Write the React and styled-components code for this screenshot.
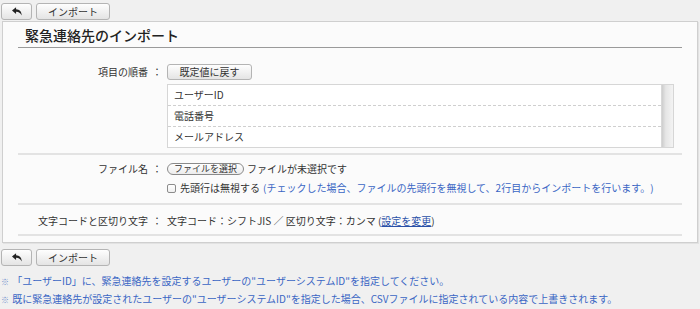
import React from "react";
import styled, { createGlobalStyle } from "styled-components";

const GlobalStyle = createGlobalStyle`
    html, body {
        margin: 0;
        padding: 0;
        background: #f0f0f0;
    }
    body {
        font-family: "Noto Sans CJK JP", "Noto Sans", sans-serif;
        font-size: 10px;
        color: #333;
        text-spacing-trim: space-all;
    }
`;

const Page = styled.div`
    width: 700px;
`;

const Toolbar = styled.div`
    display: flex;
    gap: 4px;
    padding: ${(p) => p.$pad || "3px 0 0 1px"};
`;

const Button = styled.button`
    display: inline-flex;
    align-items: center;
    justify-content: center;
    box-sizing: border-box;
    width: ${(p) => p.$w}px;
    height: ${(p) => p.$h || 17}px;
    padding: 0;
    border: 1px solid #b4b4b4;
    border-radius: 3px;
    background: linear-gradient(#fefefe, #e4e4e4);
    font-family: inherit;
    font-size: 10px;
    line-height: 1;
    color: #333;
`;

const Panel = styled.div`
    box-sizing: border-box;
    width: 696px;
    margin: 1px 0 0 2px;
    padding: 0 15px 6px 15px;
    background: #fbfbfb;
    border: 1px solid #cfcfcf;
    box-shadow: 1px 1px 0 #e2e2e2;
`;

const Title = styled.h1`
    margin: 0;
    padding: 3px 7px 2px;
    font-size: 14px;
    line-height: 20px;
    font-weight: 500;
    color: #222;
    border-bottom: 1px solid #9a9a9a;
`;

const Row = styled.div`
    display: grid;
    grid-template-columns: 144px 1fr;
    column-gap: 5px;
    align-items: start;
    padding: ${(p) => p.$pad};
    border-bottom: 2px solid #e3e3e3;
`;

const Label = styled.div`
    text-align: right;
    line-height: ${(p) => p.$lh || 15}px;
    white-space: nowrap;
`;

const Colon = styled.span`
    display: inline-block;
    width: 10px;
    margin-left: 4px;
    text-align: center;
`;

const Value = styled.div`
    display: flex;
    flex-direction: column;
    align-items: flex-start;
    gap: ${(p) => p.$gap || 0}px;
    min-width: 0;
`;

const Line = styled.div`
    display: flex;
    align-items: center;
    height: 15px;
    white-space: pre;
`;

const ListBox = styled.div`
    display: flex;
    align-self: stretch;
    margin: 4px 8px 0 0;
    background: #fff;
    border: 1px solid #d6d6d6;
`;

const Items = styled.div`
    flex: 1;
`;

const Item = styled.div`
    height: 20px;
    line-height: 20px;
    padding-left: 6px;
    border-bottom: 1px dashed #cfcfcf;

    &:last-child {
        border-bottom: none;
    }
`;

const Track = styled.div`
    width: 11px;
    background: linear-gradient(to right, #cdcdcd, #e6e6e6 35%, #f3f3f3);
    border-left: 1px solid #d8d8d8;
`;

const FileButton = styled.button`
    box-sizing: border-box;
    height: 12px;
    padding: 0 6px;
    margin-right: 3px;
    border: 1px solid #8a8a8a;
    border-radius: 6px;
    background: linear-gradient(#ffffff, #ececec);
    font-family: inherit;
    font-size: 9px;
    line-height: 1;
    color: #333;
`;

const Check = styled.input.attrs({ type: "checkbox" })`
    appearance: none;
    box-sizing: border-box;
    width: 9px;
    height: 9px;
    margin: 2px 4px 0 0;
    border: 1px solid #8c8c8c;
    border-radius: 2px;
    background: linear-gradient(#fff, #f0f0f0);
`;

const Hint = styled.span`
    color: #3a66c4;
    margin-left: 3px;
`;

const Link = styled.a`
    color: #2950a8;
    text-decoration: underline;
`;

const Notes = styled.div`
    padding: 6px 0 0 1px;
    color: #3a66c4;
    line-height: 17px;
`;

const Mark = styled.span`
    display: inline-block;
    width: 9px;
    font-size: 8px;
    color: #6f8fcc;
`;

const BackIcon = () => (
    <svg width="10" height="9" viewBox="0 0 16 14" aria-hidden="true">
        <path
            d="M6.5 0 L0 5.5 L6.5 11 V7.6 C10.5 7.4 13.2 9.2 15.5 13.5 C15.6 7.4 12 3.6 6.5 3.5 Z"
            fill="#222"
        />
    </svg>
);

const Actions = ({ pad }) => (
    <Toolbar $pad={pad}>
        <Button $w={31}>
            <BackIcon />
        </Button>
        <Button $w={74}>インポート</Button>
    </Toolbar>
);

export default function App() {
    return (
        <Page>
            <GlobalStyle />
            <Actions />
            <Panel>
                <Title>緊急連絡先のインポート</Title>

                <Row $pad="16px 0 5px">
                    <Label $lh={16}>
                        項目の順番<Colon>：</Colon>
                    </Label>
                    <Value>
                        <Button $w={85} $h={16}>既定値に戻す</Button>
                        <ListBox>
                            <Items>
                                <Item>ユーザーID</Item>
                                <Item>電話番号</Item>
                                <Item>メールアドレス</Item>
                            </Items>
                            <Track />
                        </ListBox>
                    </Value>
                </Row>

                <Row $pad="6px 0 8px">
                    <Label>
                        ファイル名<Colon>：</Colon>
                    </Label>
                    <Value $gap={4}>
                        <Line>
                            <FileButton>ファイルを選択</FileButton>
                            ファイルが未選択です
                        </Line>
                        <Line>
                            <Check />
                            先頭行は無視する
                            <Hint>(チェックした場合、ファイルの先頭行を無視して、2行目からインポートを行います。)</Hint>
                        </Line>
                    </Value>
                </Row>

                <Row $pad="8px 0 6px">
                    <Label>
                        文字コードと区切り文字<Colon>：</Colon>
                    </Label>
                    <Value>
                        <Line>
                            文字コード：シフトJIS ／ 区切り文字：カンマ (<Link href="#">設定を変更</Link>)
                        </Line>
                    </Value>
                </Row>
            </Panel>
            <Actions pad="6px 0 0 1px" />
            <Notes>
                <div>
                    <Mark>※</Mark> 「ユーザーID」に、緊急連絡先を設定するユーザーの"ユーザーシステムID"を指定してください。
                </div>
                <div>
                    <Mark>※</Mark> 既に緊急連絡先が設定されたユーザーの"ユーザーシステムID"を指定した場合、CSVファイルに指定されている内容で上書きされます。
                </div>
            </Notes>
        </Page>
    );
}
